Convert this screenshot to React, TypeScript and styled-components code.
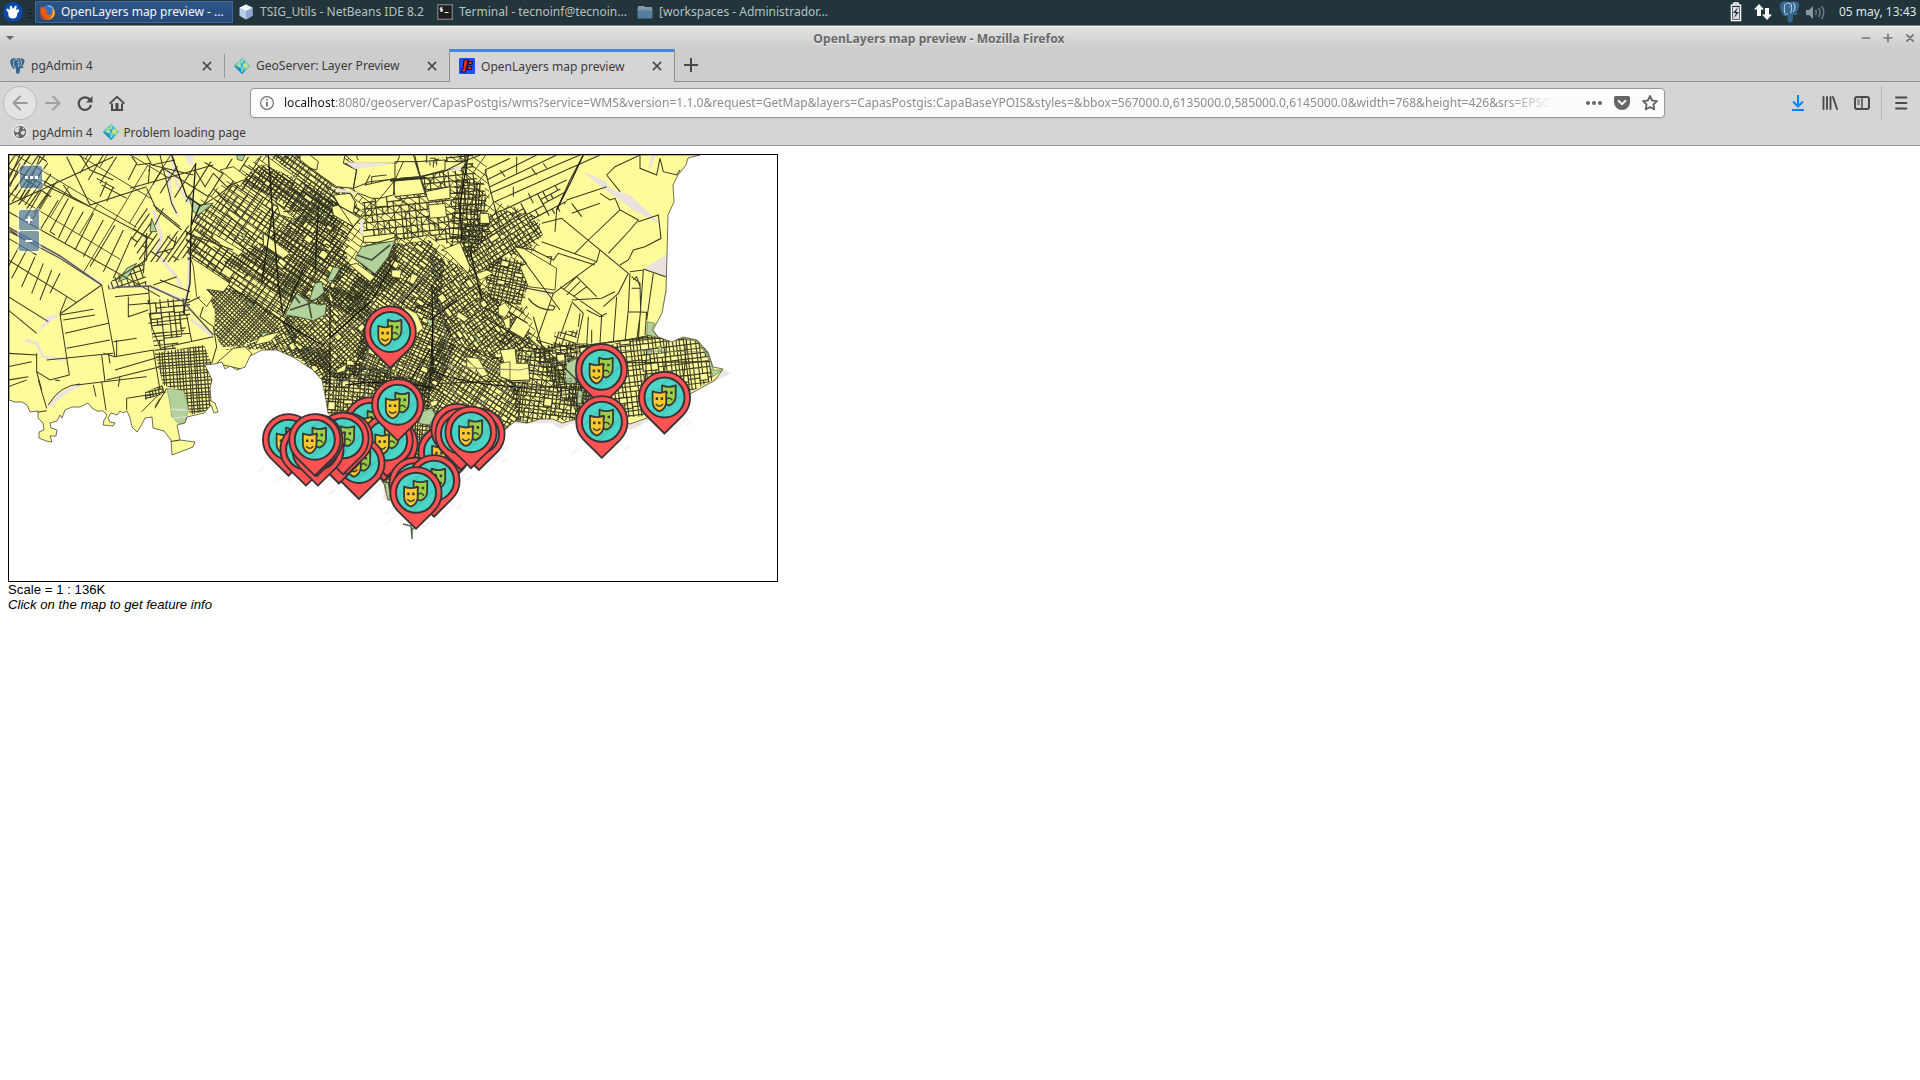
import React from 'react';
import styled, { createGlobalStyle, css } from 'styled-components';

const Global = createGlobalStyle`
  *{box-sizing:border-box}
  html,body{margin:0;background:#fff}
  body{font-family:"Noto Sans","Open Sans",sans-serif;font-size:12px;color:#3b3b3b;overflow:hidden}
  svg{display:block;flex:none}
`;

const Desktop = styled.div`width:1920px;height:1080px;display:flex;flex-direction:column;background:#fff;overflow:hidden;`;
const Panel = styled.header`
  height:26px;flex:none;display:flex;align-items:flex-start;background:#21353b;
  border-bottom:1px solid #777f81;color:#b9c0c1;white-space:nowrap;padding-left:3px;
`;
const PanelLogo = styled.div`margin-top:2px;`;
const Grip = styled.i`width:4px;height:9px;margin:9px 3px 0 5px;background:repeating-linear-gradient(#11191c 0 1px,#21353b 1px 4px);`;
const Task = styled.div<{ $w: number; $active?: boolean }>`
  width:${p => p.$w}px;height:22px;margin-top:1px;padding-left:5px;display:flex;align-items:center;gap:6px;
  line-height:20px;font-size:12px;
  ${p => p.$active && css`background:linear-gradient(#2b5588,#28497a);border:1px solid #3b6aa0;color:#f4f6f8;padding-left:4px;gap:5px;`}
`;
const TaskText = styled.span<{ $up?: number }>`padding-bottom:${p => p.$up ?? 1}px;`;
const Tray = styled.div`margin-left:auto;display:flex;align-items:center;height:24px;padding-right:2px;`;
const TraySlot = styled.div<{ $l: number }>`margin-left:${p => p.$l}px;`;
const Clock = styled.span`margin-left:13px;color:#dfe6e8;line-height:20px;padding-bottom:1px;width:79px;`;

const TitleBar = styled.div`
  height:23px;flex:none;display:flex;align-items:center;border-top:1px solid #f6f6f6;
  background:linear-gradient(#e2e2e2,#cdcdcd);padding:0 5px 0 6px;
`;
const Title = styled.div`
  flex:1;text-align:center;font-weight:700;font-size:12.150px;color:#6a6a6a;text-shadow:0 1px 0 #eee;padding-left:2px;line-height:22px;padding-top:1px;
`;
const WinButtons = styled.div`display:flex;gap:12px;`;

const TabStrip = styled.nav`height:33px;flex:none;display:flex;background:#cdcdcd;box-shadow:inset 0 -1px #909090;`;
const Tab = styled.div<{ $active?: boolean }>`
  width:225px;height:33px;display:flex;align-items:center;gap:6px;padding:0 13px 0 9px;white-space:nowrap;
  background:linear-gradient(#999,#999) right 5px/1px 24px no-repeat;
  ${p => p.$active && css`
    width:226px;margin-left:-1px;background:#d5d5d5;border:1px solid #909090;border-bottom:0;border-top-color:#3f8ade;
    box-shadow:inset 0 2px #3f8ade;padding:0 12px 0 9px;`}
`;
const TabText = styled.span`flex:1;font-size:12.050px;`;
const NewTab = styled.div`padding:9px 0 0 9px;`;

const Toolbar = styled.div`height:41px;flex:none;display:flex;align-items:center;background:#d5d5d5;padding:0 11px 0 3px;`;
const BackButton = styled.div`
  width:34px;height:34px;border:1px solid #b8b8b8;border-radius:50%;background:#e3e3e3;display:flex;align-items:center;justify-content:center;
`;
const NavIcons = styled.div`display:flex;gap:16px;margin-left:8px;width:205px;`;
const UrlBar = styled.div`
  width:1415px;height:30px;display:flex;align-items:center;background:#fcfcfc;border:1px solid #979797;
  border-radius:4px;padding:0 6px 0 9px;box-shadow:0 1px 2px #0001;
`;
const Url = styled.div`
  flex:1;margin-left:10px;overflow:hidden;white-space:nowrap;color:#8d8d8d;font-size:12.080px;line-height:20px;
  mask-image:linear-gradient(to right,#000 1225px,transparent 1268px);
  b{font-weight:400;color:#1a1a1a}
`;
const UrlIcons = styled.div`display:flex;gap:12px;`;
const RightIcons = styled.div`margin-left:auto;display:flex;align-items:center;gap:16px;`;
const Divider = styled.i`width:1px;height:34px;background:#b6b6b6;margin:0 -5px 0 -5px;`;

const Bookmarks = styled.div`
  height:23px;flex:none;display:flex;align-items:center;gap:11px;padding:0 12px 4px;background:#d5d5d5;border-bottom:1px solid #969696;
`;
const Bookmark = styled.div`display:flex;align-items:center;gap:4px;line-height:18px;font-size:11.800px;`;

const Page = styled.main`padding:8px;font:13.170px "Liberation Sans",Arial,sans-serif;color:#000;line-height:15px;`;
const MapFrame = styled.div`width:770px;height:428px;border:1px solid #000;position:relative;`;
const Control = styled.div<{ $x: number; $y: number }>`
  position:absolute;left:${p => p.$x}px;top:${p => p.$y}px;background:#fff6;border-radius:4px;padding:2px;display:flex;flex-direction:column;gap:1px;
`;
const ControlButton = styled.div<{ $w: number }>`
  width:${p => p.$w}px;height:${p => p.$w}px;background:rgba(0,60,136,.5);border-radius:2px;display:flex;align-items:center;justify-content:center;
`;
const Scale = styled.div`letter-spacing:.03px;`;
const Hint = styled.em`display:block;`;

/* ---------- small icons ---------- */
const Xubuntu = () => (
  <svg width="20" height="20" viewBox="0 0 20 20">
    <circle cx="10" cy="10" r="10" fill="#0a48a5" />
    <path d="M3.200 7.500l1.600-1 2 1.700V4.500l1.800-1 1.200 3.600 2.700-3.600 1.300.8-.8 3.500 2.600-.6.7 2-2 2c0 4-2 5.300-4.600 5.300-3.700 0-4.700-2.800-4.300-5.500z" fill="#fff" />
  </svg>
);
const Firefox = () => (
  <svg width="16" height="16" viewBox="0 0 16 16">
    <circle cx="8.400" cy="7.600" r="6.600" fill="#2f6fd0" />
    <path d="M7 2c3-1 5 0 6 2l-3-1z" fill="#8dc8ee" />
    <path d="M1 2l2 1.600 3-.6-1 2 3 2-2 2c1 2 4 2 5 1 2-2 1-4 0-5 5 3 3 10-3 11C2 16.500-.5 12 .4 7z" fill="#e65c12" />
    <path d="M12 3c5 5 3 12-4 12.500 4-2 6-5 4-12.500" fill="#ffbe25" />
    <path d="M1 7c0 5 3 7 6 8-5 0-7-4-6-8" fill="#a52a12" />
  </svg>
);
const Cube = () => (
  <svg width="16" height="16" viewBox="0 0 16 16">
    <path d="M8 .5l6.500 3.200v8L8 15.500l-6.500-3.800v-8z" fill="#b9cdea" />
    <path d="M8 .5l6.500 3.200L8 7 1.500 3.700z" fill="#eef4fc" />
    <path d="M8 7l6.500-3.300v8L8 15.500z" fill="#8fa8cf" />
  </svg>
);
const Term = () => (
  <svg width="16" height="16" viewBox="0 0 16 16">
    <rect x=".7" y=".7" width="14.600" height="14.600" fill="#1d1f20" stroke="#777" strokeWidth="1.400" />
    <path d="M5.500 4H3.200v1.500h2.300V7H3M4.300 3v5M7.500 8.500h4" stroke="#eee" fill="none" />
  </svg>
);
const Folder = () => (
  <svg width="16" height="14" viewBox="0 0 16 14">
    <path d="M1 1h6l1 1h7v4H1z" fill="#8a9aa2" /><path d="M.5 4h15v9.500H.5z" fill="#557f9d" /><path d="M.5 4h15v1.500H.5z" fill="#7297b0" />
  </svg>
);
const Elephant = ({ s = 16, edge = '#d5d5d5' }: { s?: number; edge?: string }) => (
  <svg width={s} height={s} viewBox="0 0 16 16">
    <path d="M3 .7C5-.2 6 .2 7.500.8 9 .2 10 .3 11 .6c3-.7 4.700.6 4.500 2.600-.3 2-1.300 4-2.500 5.600l2 .2c-1 1.400-2.500 1.300-4 1.200l-.4 4.500c-1 1.500-3.600 1.300-3.600-.7V10C5.500 11.500 4 11 3 9 1.500 6 0 2.500 3 .7z" fill="#336791" />
    <path d="M5.300 2C4 4 4.600 6.500 5 9M6 2c2-1.200 4 0 4 2.500 0 2-.8 2.500-.6 4.500M11 1.200c2 2.300 2 4.300 0 6.800M7 9.700c-.6-.6-1.600 0-2 .5M8.500 3.800v1" stroke={edge} strokeWidth=".75" fill="none" />
  </svg>
);
const Geo = () => (
  <svg width="16" height="16" viewBox="0 0 16 16">
    <path d="M8 0l8 8-8 8-8-8z" fill="#2fb4d6" />
    <path d="M8 0l3 3-4 3-1 3-5-1-1-.2z" fill="#57c9b4" />
    <path d="M5 3l2 1-1 2 1 2-2 1-2-2zM9 6l3-2 3 4-2 3-2-1-1 2-1-3z" fill="#b3dc84" />
    <path d="M2 8l5 3 1 5-8-8zM8 13l3 0-3 3z" fill="#1f8fbd" />
    <path d="M8 1v4M4 8h3M8 9v5M11 6v2" stroke="#e7f8e0" strokeWidth=".8" />
  </svg>
);
const LayersFav = () => (
  <svg width="16" height="16" viewBox="0 0 16 16">
    <rect width="16" height="16" rx="1" fill="#1d4fff" />
    <path d="M5 2h4L6.500 14h-4l.5-3h1zM9.500 3.500h4l-.6 3H9zM9 8.500h4l-.6 3H8.300z" fill="#ff2d14" stroke="#150a3a" strokeWidth="1.100" />
  </svg>
);
const Globe = () => (
  <svg width="16" height="16" viewBox="0 0 16 16">
    <circle cx="8" cy="8" r="7" fill="#6b6b6b" stroke="#f1f1f1" strokeWidth="1.300" />
    <path d="M3 4.500l4-2.300 1 2-2 1.300 1.500 1-2 2-3-1zM9 8l2.500-1.500 2 1.500-2 3L9 10zM5 10l2 2-1 1.500-2-2zM10 3l2.500 1.500-1 1z" fill="#e2e2e2" />
  </svg>
);
const Close = () => <svg width="10" height="10" viewBox="0 0 11 11"><path d="M1 1l9 9M10 1l-9 9" stroke="#4b4b4b" strokeWidth="1.800" /></svg>;
const Stroke = ({ d, c = '#4a4a4a', w = 2, s = 16 }: { d: string; c?: string; w?: number; s?: number }) => (
  <svg width={s} height={s} viewBox="0 0 16 16"><path d={d} fill="none" stroke={c} strokeWidth={w} strokeLinecap="round" strokeLinejoin="round" /></svg>
);

/* ---------- map ---------- */
type Pt = [number, number];
function rng(seed: number) {
  let a = seed * 7919 + 13;
  return () => {
    a = (a + 0x6d2b79f5) | 0;
    let t = Math.imul(a ^ (a >>> 15), 1 | a);
    t = (t + Math.imul(t ^ (t >>> 7), 61 | t)) ^ t;
    return ((t ^ (t >>> 14)) >>> 0) / 4294967296;
  };
}
/* Streets of one district, plus the larger blocks that no street crosses. */
function streets(poly: Pt[], deg: number, su: number, sv: number, seed: number, keep: number) {
  const r = rng(seed);
  const xs = poly.map(p => p[0]), ys = poly.map(p => p[1]);
  const x0 = Math.min(...xs), x1 = Math.max(...xs), y0 = Math.min(...ys), y1 = Math.max(...ys);
  const cx = (x0 + x1) / 2, cy = (y0 + y1) / 2, R = Math.hypot(x1 - x0, y1 - y0) / 2;
  const c = Math.cos((deg * Math.PI) / 180), s = Math.sin((deg * Math.PI) / 180);
  const P = (u: number, v: number) => `${(cx + u * c - v * s).toFixed(1)} ${(cy + u * s + v * c).toFixed(1)}`;
  const cols: number[] = [];
  for (let u = -R; u < R; u += su * (0.65 + r() * 0.7)) cols.push(u);
  let d = '', blocks = '';
  for (let v = -R; v < R;) {
    const step = sv * (0.7 + r() * 0.6);
    d += `M${P(-R, v)}L${P(R, v)}`;
    cols.forEach((u, i) => {
      if (r() < keep) d += `M${P(u, v)}L${P(u, v + step)}`;
      if (keep < 1 && r() < 0.022 && cols[i + 2] !== undefined) {
        const w = cols[i + 2] - u, h = step * (1.2 + r() * 0.8);
        blocks += `M${P(u, v)}L${P(u + w, v)}L${P(u + w, v + h)}L${P(u, v + h)}Z`;
      }
    });
    v += step;
  }
  return { d, blocks };
}
const districts: { p: Pt[]; a: number; u: number; v: number; k: number; w?: number }[] = [
  { p: [[9, 155], [195, 155], [150, 200], [115, 270], [98, 285], [60, 250], [9, 225]], a: 31, u: 17, v: 38, k: .5, w: .9 },
  { p: [[200, 200], [240, 172], [262, 155], [362, 155], [365, 190], [400, 165], [485, 150], [490, 200], [540, 215], [540, 245], [528, 262], [525, 300], [540, 345], [590, 350], [590, 420], [500, 430], [400, 500], [330, 413], [320, 370], [270, 345], [285, 325], [222, 287], [190, 262]], a: 36, u: 8, v: 7, k: .75, w: .9 },
  { p: [[187, 250], [185, 228], [200, 210], [215, 200], [240, 178], [270, 170], [330, 200], [350, 240], [340, 280], [285, 325], [225, 288], [206, 268], [188, 262]], a: 34, u: 5.6, v: 5.2, k: .85 },
  { p: [[237, 181], [262, 164], [300, 180], [340, 205], [335, 230], [300, 215], [270, 196]], a: 36, u: 3.7, v: 3.4, k: .9 },
  { p: [[265, 240], [300, 215], [335, 225], [352, 270], [300, 306], [262, 285], [222, 262]], a: 35, u: 4, v: 3.8, k: .88 },
  { p: [[207, 290], [225, 287], [250, 296], [284, 322], [270, 335], [240, 346], [222, 347], [214, 332], [215, 312]], a: 43, u: 2.8, v: 2.8, k: 1 },
  { p: [[155, 353], [204, 345], [212, 365], [212, 385], [210, 410], [190, 415], [184, 392], [163, 385]], a: -4, u: 3.2, v: 3.4, k: 1 },
  { p: [[145, 392], [162, 385], [166, 393], [145, 400]], a: -12, u: 3.5, v: 3, k: 1 },
  { p: [[225, 350], [262, 340], [290, 318], [300, 345], [330, 350], [330, 385], [322, 382], [300, 359], [262, 349]], a: 60, u: 3.4, v: 3.6, k: .92 },
  { p: [[283, 325], [300, 298], [330, 285], [372, 300], [372, 350], [345, 385], [300, 357]], a: 48, u: 3.4, v: 3.5, k: .92 },
  { p: [[322, 378], [345, 360], [385, 370], [430, 385], [430, 440], [400, 490], [385, 500], [375, 440], [328, 413]], a: 4, u: 3.5, v: 3.5, k: .95 },
  { p: [[322, 300], [345, 262], [362, 275], [385, 245], [430, 240], [445, 262], [440, 300], [400, 330], [365, 325]], a: 36, u: 3.7, v: 3.3, k: .92 },
  { p: [[365, 322], [400, 310], [440, 300], [455, 345], [440, 390], [380, 395], [350, 375]], a: 24, u: 3.4, v: 3.4, k: .92 },
  { p: [[430, 255], [452, 262], [480, 285], [520, 320], [535, 345], [495, 360], [455, 345], [435, 310]], a: 55, u: 3.9, v: 3.6, k: .9 },
  { p: [[440, 340], [495, 355], [520, 370], [520, 425], [507, 428], [470, 440], [430, 440], [420, 385]], a: 33, u: 3.9, v: 4, k: .9 },
  { p: [[495, 355], [535, 345], [590, 360], [590, 420], [553, 420], [520, 424], [510, 385]], a: 7, u: 3.5, v: 4.4, k: .92 },
  { p: [[530, 350], [560, 342], [610, 345], [650, 334], [697, 340], [708, 352], [713, 380], [690, 392], [647, 416], [585, 420], [560, 395]], a: -7, u: 4, v: 5, k: .95 },
  { p: [[362, 200], [385, 192], [415, 165], [470, 150], [482, 200], [490, 232], [440, 245], [430, 235], [395, 242], [363, 240]], a: -6, u: 5.5, v: 6, k: .68 },
  { p: [[455, 178], [484, 182], [490, 232], [462, 270], [450, 245]], a: 5, u: 4.2, v: 4.6, k: .9 },
  { p: [[462, 225], [500, 210], [535, 216], [543, 235], [530, 248], [500, 262], [472, 280], [460, 258]], a: -32, u: 4, v: 4.2, k: .94 },
  { p: [[500, 256], [536, 265], [530, 282], [520, 305], [490, 302], [484, 270]], a: 12, u: 3.5, v: 3.6, k: .97 },
  { p: [[490, 305], [520, 300], [535, 345], [500, 345], [478, 310]], a: 30, u: 9, v: 7, k: .6 },
  { p: [[555, 332], [578, 330], [574, 352], [552, 350]], a: 18, u: 5, v: 5, k: .75 },
  { p: [[505, 212], [545, 190], [555, 185], [570, 196], [560, 212], [530, 222]], a: -28, u: 8, v: 7, k: .6 },
  { p: [[148, 170], [238, 158], [270, 155], [240, 180], [200, 208], [182, 200], [156, 192]], a: -58, u: 22, v: 13, k: .55 },
  { p: [[130, 235], [146, 205], [160, 240], [190, 225], [200, 250], [175, 262], [140, 262]], a: -55, u: 12, v: 5, k: .55 },
  { p: [[116, 276], [143, 262], [147, 285], [104, 290]], a: -20, u: 5, v: 6, k: .75 },
  { p: [[146, 300], [190, 298], [190, 318], [175, 350], [155, 353], [150, 320]], a: -6, u: 6, v: 6.5, k: .7 },
  { p: [[270, 155], [310, 155], [350, 190], [362, 215], [345, 240], [300, 180]], a: 36, u: 4.3, v: 4.3, k: .82 },
  { p: [[362, 262], [385, 246], [395, 242], [400, 280], [372, 300], [345, 300]], a: 38, u: 3.4, v: 3.4, k: .94 },
  { p: [[9, 155], [45, 155], [56, 190], [38, 215], [9, 200]], a: -55, u: 30, v: 7, k: .5 },
];
const grids = districts.map((q, i) => streets(q.p, q.a, q.u, q.v, i + 3, q.k));
const toPts = (p: Pt[]) => p.map(q => q.join()).join(' ');
const LAND = 'M9 155H700L688 158 686 165 678 175 673 185 674 202 668 215 667 255 666 290 662 313 653 330 658 337 672 342 683 337 697 340 708 352 713 367 723 369 715 380 690 394 668 406 647 418 630 424 610 418 573 420 562 423 553 419 540 419 527 423 515 421 507 428 485 445 460 452 440 480 420 500 388 500 384 484 350 440 328 413 326 400 322 380 313 370 293 357 277 350 262 350 250 356 245 367 237 370 230 366 225 369 222 362 214 364 205 365 212 380 210 388 211 401 215 403 218 412 214 413 211 405 204 413 187 417 185 423 177 425 180 440 195 442 193 447 172 455 171 440 164 431 153 428 152 417 145 418 141 426 137 432 132 427 130 418 127 411 123 413 120 411 117 415 111 413 108 418 110 422 115 423 113 426 103 425 104 420 107 415 103 411 97 411 92 408 88 403 80 407 72 407 65 410 62 418 60 415 57 421 50 423 51 428 57 430 56 436 50 436 52 442 46 441 39 438 39 432 44 430 43 423 38 418 38 411 30 412 27 405 22 402 15 402 9 400Z';

const Mask = ({ x, y, fill, sad }: { x: number; y: number; fill: string; sad?: boolean }) => (
  <g transform={`translate(${x} ${y})`} stroke="#383a36" strokeLinejoin="round">
    <path d="M-6.800-9.500Q0-6.500 6.800-9.500V1.500C6.800 6 3.500 9.500 0 10.500-3.500 9.500-6.800 6-6.800 1.500Z" fill={fill} strokeWidth="1.800" />
    <path d="M-3.700-2.200h2.400M1.300-2.200h2.400" strokeWidth="2.600" />
    <path d={sad ? 'M-3.500 5.500Q0 .8 3.500 5.500' : 'M-3.600 3.200Q0 7.500 3.600 3.200'} fill="none" strokeWidth="1.500" />
  </g>
);
const Pin = ({ x, y }: { x: number; y: number }) => (
  <g transform={`translate(${x} ${y})`}>
    <path d="M-24 26l-6 6M24 16l5-4M8 35l14-14M22 28l6-4" stroke="#000" strokeOpacity=".035" strokeWidth="3" />
    <path d="M0 36L-18.200 18A25.600 25.600 0 1 1 18.200 18Z" fill="#ff5252" stroke="#393235" strokeWidth="1.800" />
    <circle r="20" fill="#4ad5c7" stroke="#393235" strokeWidth="2" />
    <path d="M-18 4L4-18M-12 14L14-12M-3 18L18-3" stroke="#38bfb3" strokeOpacity=".35" strokeWidth="3" />
    <Mask x={4.400} y={-2.600} fill="#9ed047" sad />
    <Mask x={-5.100} y={3.300} fill="#fbc92d" />
  </g>
);
const pins: Pt[] = [
  [390.2, 332], [370, 423], [392, 444], [384, 445], [387.2, 440.500], [444, 452], [457, 429.500], [461, 434], [479, 434], [471, 432.2],
  [415, 483.3], [434, 480.700], [416, 492.8], [359, 463], [339, 447.500], [347, 438.6], [343, 438.3], [288.500, 439.7],
  [306, 449.600], [318, 449.600], [317, 440], [314.800, 439.700], [397.700, 404.700], [601.500, 369.800], [601.900, 421.800], [664.500, 397.500],
];

const MapDrawing = () => (
  <svg width="768" height="426" viewBox="9 155 768 426">
    <defs>
      <clipPath id="land"><path d={LAND} /></clipPath>
      {districts.map((q, i) => <clipPath key={i} id={`d${i}`}><polygon points={toPts(q.p)} /></clipPath>)}
    </defs>
    <path d="M663 313L667 250 667 290zM720 370l11 3-45 24-38 24-18 9-20-8-40 2-10 5-8-6-40 1-15 18-20 4 20-40zM386 480l-3 18 6 4 5-4z" fill="#ece4de" />
    <path d={LAND} fill="#fefb9a" />
    <g clipPath="url(#land)">
      {/* unbuilt strips and water courses */}
      <g transform="translate(0 150) scale(.33333)" fill="none" stroke="#e9e1dc" strokeWidth="9">
        <path d="M515 15L530 100 560 150 600 175 575 225 565 400 550 490 640 560M460 180L485 260 470 310 530 380 545 420M505 60L515 160 535 200M330 410L450 410 550 450M0 220L180 320 300 400M75 570L110 580 130 620 200 630" />
        <path d="M180 492L140 500 115 545zM555 15h25v30h-15z" fill="#ece4de" stroke="none" />
      </g>
      <g transform="translate(0 380) scale(.33333)"><path d="M140 80Q180 25 240 12L250 14Q190 40 155 80z" fill="#ece4de" /></g>
      <g transform="translate(400 150) scale(.33333)" fill="#e9e2dd">
        <path d="M548 65L610 90 640 120 690 135 790 228 700 180 610 115zM755 15h12L752 55 745 50zM730 357L802 312 800 380zM380 412Q420 435 460 430L455 436 420 432zM345 470l30-8 10 15z" />
      </g>
      {/* street grids */}
      {districts.map((q, i) => (
        <g key={i} clipPath={`url(#d${i})`} stroke="#2c2c1e" strokeOpacity=".9" strokeWidth={q.w ?? 1.18}>
          <path d={grids[i].d} fill="none" />
          {i > 0 && <path d={grids[i].blocks} fill="#fefb9a" />}
        </g>
      ))}
      {/* open land north of the centre */}
      <g transform="translate(300 155) scale(.33333)" fill="#fefb9a" stroke="#33331f" strokeWidth="2.800">
        <path d="M60 0L135 0 130 25 170 45 160 100 110 95 60 60 0 15 0 0zM135 25L300 22 340 20 500 20 490 35 360 65 280 75 215 85 160 100 170 42z" />
        <path d="M135 0L300 0 290 25 165 25zM160 100L210 80 285 72 280 120 240 130 215 130 165 110zM95 155L115 150 180 190 160 215 100 180zM285 20L345 20 360 65 285 72zM350 20L435 15 435 45 360 65zM280 78L360 68 375 115 285 125zM375 110L450 95 450 130 385 138zM190 245L285 235 285 262 190 262zM540 175l25 0 5 30-30 0zM100 120l50-5 15 25-5 35-40-20z" />
        <path d="M135 22L290 25 165 42zM95 97L190 115 120 112zM435 50L490 30 480 45zM180 195h10v45l-10-5z" fill="#ece4de" stroke="none" />
        <path d="M270 77L380 68" strokeWidth="6" />
        <path d="M175 15Q160 0 190 -10M30 0L55 20 50 45 30 40M75 90L160 215M215 85L215 65 260 60M285 125L415 210M240 130L160 215M310 20L285 75 240 130M400 18v20M390 18v14M410 18v14M340 0L380 120" fill="none" />
      </g>
      {/* undivided blocks inside the city */}
      <g transform="translate(400 150) scale(.33333)" fill="#fefb9a" stroke="#33331f" strokeWidth="2.500">
        <path d="M125 300L180 278 210 350 205 370 140 305zM300 600L345 595 350 640 385 640 390 695 340 697 300 680 312 640zM85 165l50-5 5 40-50 5zM20 470l40 30-25 25zM195 620l40 5 30 50-20 5zM340 290l30 5 100 60-5 65-80-10-25-60 20-10z" />
      </g>
      <g transform="translate(270 270) scale(.33333)" fill="#fefb9a" stroke="#33331f" strokeWidth="2">
        <path d="M400 110l40 20 20 45-25 20zM365 0l30 0-5 25-25-5zM255 0l30 0 25 20-10 15zM425 10l20 8-15 25-12-8zM565 125l30 20-12 10-25-15zM685 110l20-12 15 20-15 25-20-10zM700 150l20-10v35l-12 0zM590 270l30 25-5 15-25-20zM690 280l30-5v55l-30-10zM200 300l30-18-5 20-25 8zM625 70l15 10-10 8-10-8zM380 285v35l-8-5zM610 15l40-15 20 10-40 20zM480 395l25-5-5 15-15 5zM175 60l15 30-10 10z" />
      </g>
      <g transform="translate(0 150) scale(.33333)" fill="#fefb9a" stroke="#33331f" strokeWidth="2.500">
        <path d="M570 320L690 400 670 425 620 418 640 440 620 470 590 440 580 350zM660 630L700 595 735 590 755 610 735 660 650 640zM780 560l60-15-30 30-45 10zM1070 340l55 40-15 15-60-50zM790 250l80 60-20 15-60-40zM700 50l40 30-20 30-60-50zM830 160l60 50-50-15zM640 250l90 55-15 12-80-50z" />
      </g>
      {/* parks */}
      <g fill="#b2d29b" stroke="#3e4a33" strokeWidth="2.500">
        <g transform="translate(0 150) scale(.33333)">
          <path d="M1085 290L1185 272 1165 320 1125 372 1065 325zM855 495L890 430 925 455 960 465 980 462 975 495 940 512 890 500zM945 400l20-5 8 30-25 25-20 0zM455 205l15 40-20 0zM355 395l25-40 30-15-30 45zM565 135l30 30 45-5-45 35-15-10zM710 15h25l-8 18-15-5zM1000 350l20 5-20 35-20 5zM780 550l30-5-20 15zM740 450l25 25-20-10zM725 250l12 2-5 20z" />
          <path d="M1070 315l45 15 55-45M870 480l60-20 45-30M925 455l10 50M900 460l-15-20" fill="none" strokeWidth="5" stroke="#4a4d3b" />
        </g>
        <g transform="translate(0 380) scale(.33333)"><path d="M500 25L545 30 560 60 565 90 555 130 535 130 515 110 510 70z" strokeWidth="1" /><path d="M512 88l50 2M515 115l45-5" stroke="#e5ded6" strokeWidth="4" /></g>
        <g transform="translate(400 150) scale(.33333)">
          <path d="M742 515L765 520 755 540 775 562 740 555zM845 565l45 5 35 45 15 45 28 0-30 20-15-60-30-45zM500 640l30-15-5 75-30 0zM80 510l18-4 8 12-15 10zM225 555l20 20-15-5zM740 600h15v12h-15zM775 590h10v20h-10zM395 600l10 12-10 0z" strokeWidth="1.500" />
        </g>
        <g transform="translate(380 380) scale(.33333)"><path d="M125 95l30-10 12 25-20 25-30-5zM410 120l30 2-10 12zM540 0l35-5 0 10zM595 30l12 5-3 35-12 0zM15 310l10-2 5 50-10 0z" strokeWidth="1.500" /></g>
      </g>
      {/* field boundaries and main roads, west */}
      <g transform="translate(0 150) scale(.33333)" fill="none" stroke="#3a3a22" strokeWidth="3.100">
        <path d="M25 165L340 20M200 20L270 165 440 110M40 60L270 170 460 270M125 90L270 170M25 185L480 440M25 265L110 315M25 330L230 458M25 440L145 515M25 480L110 550M60 15L40 60 25 90M90 15L60 65M120 20L100 70 60 150M240 15L270 60 340 90M240 70L275 15M265 90L310 15M350 20L300 100M395 20L410 40 385 90M410 45L450 40 445 100M440 15l15 30 70-15M455 45L580 75M480 15L515 160 530 190M390 115L640 45" />
        <path d="M125 120L75 205M145 130L90 220M175 150L120 240M205 145L150 245l15 10M220 170L175 265M250 185L195 280M280 190L225 300M310 210L250 320M345 225L270 350M370 240L310 365M395 260L340 385M190 105L215 140M290 85L345 115M305 105L380 145M320 95L300 140M340 110L320 155M30 110L60 40M45 120L85 60M60 145L100 85M75 165L120 100M30 240L75 270M60 285L25 350M80 300L35 385M105 320L65 410M130 340L95 430M155 360L120 450M180 370L150 430M200 440L180 490" />
        <path d="M0 230L180 325 305 405 180 492M305 405L345 620 310 610M180 492L208 675M180 495L280 478M190 510L285 495M195 550L325 520M200 595L330 570M345 440L445 430M385 465l60-5M385 440v60l60-20M445 410L455 530 480 590M350 385L440 330 440 250M350 570v50M340 575l70-10M440 250L430 370M345 620L460 600M208 675L150 690 110 665M110 610L110 665 125 720M25 610L110 615M25 650l70-15M25 690l60-10M140 630l200-20M305 615l10 80M325 610l5 30M345 660L480 620M320 690L480 650M360 680l-5 30M460 600l20 120M445 520l120-15M460 560l110-10M480 595L640 560M470 310l50-15 10-35M530 380l-70 25M560 495L575 575M480 390l90 35M560 460L600 440M610 470L600 500 640 530 650 590 635 640" />
        <path d="M585 60L615 110 640 70 680 110 730 90M640 115L720 200M600 170L650 140 700 100M440 115L470 180 545 240M460 165L540 230M490 175l-25 50M560 250L700 300M560 270L690 400M600 240L660 280M640 290L760 370M650 210L840 400M680 190L860 360M850 185L960 175M1110 75l-15 30 90-20M1090 290l100-30" />
        <path d="M805 15L818 190 815 200 785 400M818 190L835 400 848 490M587 40L573 230 570 400 550 490M955 170l-10 200M515 15L560 140 600 165 575 225" stroke="#1e1e14" strokeWidth="4" />
        <path d="M25 232L180 318 305 405M345 412L450 408 550 455 640 555" stroke="#5b5a55" strokeWidth="4.500" />
      </g>
      {/* southern peninsulas */}
      <g transform="translate(0 380) scale(.33333)" fill="none" stroke="#3a3a22" strokeWidth="3">
        <path d="M25 20L80 0M115 0L140 85M95 100l45-8M230 15L440-10M280 15l8 35M305 5L318 90M145 75Q180 15 240 12M380 55L380 90M380 55L460 42M425 95L490 30M465 80l15-25M500 25L465 85M165 0l15 2M510 185l30-5" />
      </g>
      {/* field boundaries, east */}
      <g transform="translate(400 150) scale(.33333)" fill="none" stroke="#3a3a22" strokeWidth="3.100">
        <path d="M0 85L60 80 130 65 190 35 240 15M60 80L40 0M200 15L175 150 190 280 240 400 240 470M255 60L300 230 340 290 480 480M255 60L330 25M260 90L410 15M270 110L470 15M270 130L540 15M285 155L600 15M300 185L500 90M350 20v50M395 55l15 20M300 60l15 20M340 110v30M385 130l15 30M430 40l10 15M550 15L510 90 470 180 465 245" />
        <path d="M620 75L645 50 720 15M620 75L660 125M720 15v40l50 20 10-50M780 25L790 65 830 75 840 60M600 130L630 150 645 145 660 180 715 210 690 240 625 310M660 180L565 270 525 310M715 215L775 195 783 265 735 290 700 300 685 330 660 345M485 205L685 370 655 430 610 470M425 220L485 205M425 275L590 335 600 300M350 290L400 300 460 330 475 310 585 345M590 335L460 430 380 415M480 410L610 500M530 380L590 440M520 440L560 410M490 420L530 380M500 435L540 395M515 450L605 445 645 425M515 455L550 490" />
        <path d="M460 430L410 570M515 460L480 560M550 490L530 585M565 500L560 590M605 495L600 580M650 440L640 575M690 370L685 480 675 575M685 485L740 487M730 360L690 365M695 380L720 400 722 485 710 570M730 360L715 570M740 485L735 555M760 370L740 510M730 357L797 380M695 415h25M700 390l10-10 10 30M385 445Q410 480 460 480L465 470 450 465M560 480L600 500 620 490M540 490l-5 40M575 540v40M410 570L460 585 560 590M530 590L740 560M440 320l15 0-5 25M515 190L600 160M500 150L620 110M545 200l-30-40M80 15v25M90 25h15v15" />
        <path d="M550 15L515 90 470 180M205 15L180 160 185 270M5 460L110 340M100 500L90 700M170 450L90 510" stroke="#1b1b12" strokeWidth="3.800" />
        <path d="M410 570L560 720M385 560L500 700M400 500L440 640M530 590L740 563 850 570M530 640L930 635M740 600L735 720M800 575L790 720M860 570L850 700M120 700L390 690" strokeWidth="3.500" />
      </g>
      {/* avenues through the centre */}
      <g fill="none" stroke="#15150e">
        <path d="M283 322L322 345 372 300 395 260M330 300V390M432 285L433 372M430 350L400 395M433 372Q470 385 520 387H590M283 316L303 270M345 385Q390 378 433 388M470 250L482 300" strokeWidth="1.200" />
        <path d="M300 357L345 330 400 300 440 262M330 385L400 365 520 370 610 350 700 352M400 470L430 425 520 385 600 400M372 300L365 400M440 300L460 430" stroke="#77736d" strokeWidth="1.200" strokeOpacity=".8" />
      </g>
    </g>
    <path d={LAND} fill="none" stroke="#45432f" strokeWidth=".9" strokeOpacity=".85" />
    <path d="M403 524l8 2 1 12M416 524l-4 6v9" stroke="#4c5d44" strokeWidth="1.400" fill="none" />
    {pins.map((p, i) => <Pin key={i} x={p[0]} y={p[1]} />)}
  </svg>
);

export default function App() {
  return (
    <Desktop>
      <Global />
      <Panel>
        <PanelLogo><Xubuntu /></PanelLogo>
        <Grip />
        <Task $w={198} $active><Firefox /><TaskText $up={0}>OpenLayers map preview - ...</TaskText></Task>
        <Task $w={199}><Cube /><TaskText>TSIG_Utils - NetBeans IDE 8.2</TaskText></Task>
        <Task $w={200}><Term /><TaskText>Terminal - tecnoinf@tecnoin...</TaskText></Task>
        <Task $w={210}><Folder /><TaskText>[workspaces - Administrador...</TaskText></Task>
        <Tray>
          <svg width="12" height="20" viewBox="0 0 12 20"><path d="M4 3V1h4v2M1.500 3h9v15.500h-9z" fill="none" stroke="#fff" strokeWidth="1.500" /><path d="M3 5h6v12H3z" fill="#d9dfe0" /><path d="M8 5l-5 6h3l-2 5 5-6H6z" fill="#21353b" /></svg>
          <TraySlot $l={12}><svg width="18" height="18" viewBox="0 0 18 18"><path d="M5 1l5 5.500H7V13H3V6.500H0zM13 17l5-5.500h-3V5h-4v6.500H8z" fill="#fff" /></svg></TraySlot>
          <TraySlot $l={6}><Elephant s={22} edge="#c3ccd2" /></TraySlot>
          <TraySlot $l={6}><svg width="20" height="18" viewBox="0 0 20 18"><path d="M0 7h3l4-4v13l-4-4H0z" fill="#8c989b" /><path d="M9.500 7q1.500 2.500 0 5M12.500 5q3 4.500 0 9M15.500 3q4.500 6.500 0 13" fill="none" stroke="#6a7a7e" strokeWidth="1.600" /></svg></TraySlot>
          <Clock>05 may, 13:43</Clock>
        </Tray>
      </Panel>
      <TitleBar>
        <svg width="9" height="6" viewBox="0 0 9 6"><path d="M0 1h8L4 5z" fill="#666" /></svg>
        <Title>OpenLayers map preview - Mozilla Firefox</Title>
        <WinButtons>
          <Stroke s={10} w={2.600} c="#747474" d="M2 8H14" />
          <Stroke s={10} w={2.600} c="#747474" d="M2 8H14M8 2V14" />
          <Stroke s={10} w={2.800} c="#747474" d="M3 3L13 13M13 3L3 13" />
        </WinButtons>
      </TitleBar>
      <TabStrip>
        <Tab><Elephant /><TabText>pgAdmin 4</TabText><Close /></Tab>
        <Tab><Geo /><TabText>GeoServer: Layer Preview</TabText><Close /></Tab>
        <Tab $active><LayersFav /><TabText>OpenLayers map preview</TabText><Close /></Tab>
        <NewTab><svg width="14" height="14" viewBox="0 0 14 14"><path d="M7 0v14M0 7h14" stroke="#484848" strokeWidth="2" /></svg></NewTab>
      </TabStrip>
      <Toolbar>
        <BackButton><Stroke c="#9a9a9a" d="M15 8H1.500M8 1.500L1.500 8 8 14.500" /></BackButton>
        <NavIcons>
          <Stroke c="#a0a0a0" d="M1 8H14.500M8 1.500L14.500 8 8 14.500" />
          <svg width="16" height="16" viewBox="0 0 16 16"><path d="M13 5A6.200 6.200 0 1 0 14 10" fill="none" stroke="#4a4a4a" strokeWidth="2.200" /><path d="M15.500 1v6.500H9z" fill="#4a4a4a" /></svg>
          <svg width="16" height="16" viewBox="0 0 16 16"><path d="M0 8L8 .5 16 8 14.800 9.300 8 3 1.200 9.300z" fill="#4a4a4a" /><path d="M3 8.500V15h10V8.500" fill="none" stroke="#4a4a4a" strokeWidth="2" /><path d="M6.500 8h3v8h-3z" fill="#4a4a4a" /></svg>
        </NavIcons>
        <UrlBar>
          <svg width="14" height="14" viewBox="0 0 14 14"><circle cx="7" cy="7" r="6.400" fill="none" stroke="#727272" strokeWidth="1.200" /><path d="M7 6v4.500M7 3v1.600" stroke="#727272" strokeWidth="1.800" /></svg>
          <Url><b>localhost</b>:8080/geoserver/CapasPostgis/wms?service=WMS&amp;version=1.1.0&amp;request=GetMap&amp;layers=CapasPostgis:CapaBaseYPOIS&amp;styles=&amp;bbox=567000.0,6135000.0,585000.0,6145000.0&amp;width=768&amp;height=426&amp;srs=EPSG:</Url>
          <UrlIcons>
            <svg width="16" height="16" viewBox="0 0 16 16"><g fill="#666"><circle cx="2" cy="8" r="2" /><circle cx="8" cy="8" r="2" /><circle cx="14" cy="8" r="2" /></g></svg>
            <svg width="16" height="16" viewBox="0 0 16 16"><path d="M1.500 1h13Q16 1 16 2.500V7A8 8 0 0 1 0 7V2.500Q0 1 1.500 1z" fill="#666" /><path d="M4.500 5.800L8 9.200l3.500-3.400" fill="none" stroke="#fcfcfc" strokeWidth="1.900" strokeLinecap="round" /></svg>
            <Stroke c="#666" w={1.800} d="M8 1l2.100 4.500 4.900.6-3.600 3.400.9 4.900L8 12l-4.300 2.400.9-4.900L1 6.100l4.900-.6z" />
          </UrlIcons>
        </UrlBar>
        <RightIcons>
          <svg width="16" height="16" viewBox="0 0 16 16"><path d="M8 0v11M3 6.500l5 5 5-5" fill="none" stroke="#0a84ff" strokeWidth="2" /><path d="M2 15h12" stroke="#0a84ff" strokeWidth="2" /></svg>
          <Stroke c="#4a4a4a" w={1.900} d="M1.500 2V14M5 2V14M8.500 2V14M11 2L15 14" />
          <svg width="16" height="16" viewBox="0 0 16 16"><rect x="1" y="2" width="14" height="12" rx="2" fill="none" stroke="#4a4a4a" strokeWidth="2" /><path d="M8 2v12" stroke="#4a4a4a" strokeWidth="1.500" /><path d="M3 5h3M3 7h3M3 9h3" stroke="#4a4a4a" /></svg>
          <Divider />
          <Stroke w={1.900} d="M3 2.500H13.500M3 8H13.500M3 13.500H13.500" />
        </RightIcons>
      </Toolbar>
      <Bookmarks>
        <Bookmark><Globe />pgAdmin 4</Bookmark>
        <Bookmark><Geo />Problem loading page</Bookmark>
      </Bookmarks>
      <Page>
        <MapFrame>
          <MapDrawing />
          <Control $x={9} $y={9}><ControlButton $w={22}><svg width="13" height="3" viewBox="0 0 13 3"><path d="M0 0h3v3H0zM5 0h3v3H5zM10 0h3v3h-3z" fill="#fff" /></svg></ControlButton></Control>
          <Control $x={8} $y={53}>
            <ControlButton $w={20}><svg width="8" height="8"><path d="M4 .5v7M.5 4h7" stroke="#fff" strokeWidth="2" /></svg></ControlButton>
            <ControlButton $w={20}><svg width="8" height="8"><path d="M.5 4h7" stroke="#fff" strokeWidth="2" /></svg></ControlButton>
          </Control>
        </MapFrame>
        <Scale>Scale = 1 : 136K</Scale>
        <Hint>Click on the map to get feature info</Hint>
      </Page>
    </Desktop>
  );
}
